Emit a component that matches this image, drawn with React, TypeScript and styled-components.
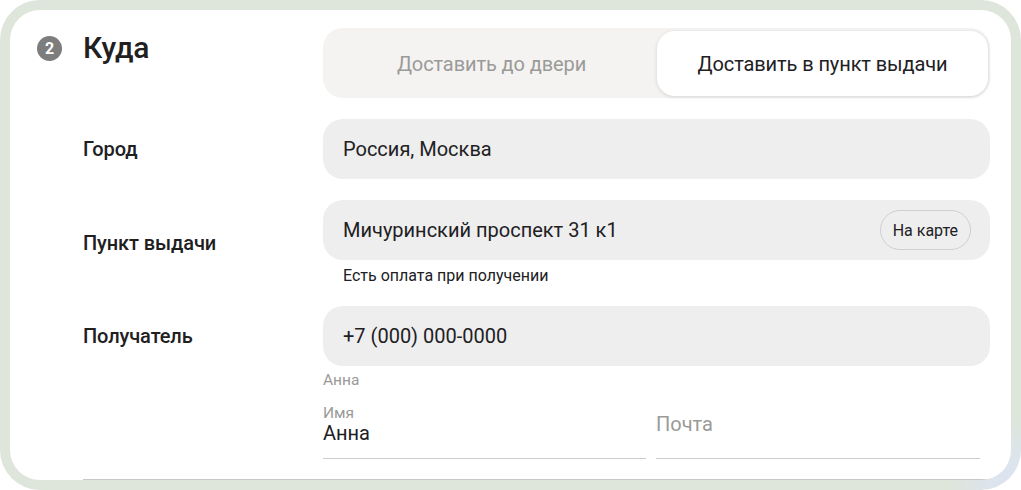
import React from "react";
import styled, { createGlobalStyle } from "styled-components";

const Global = createGlobalStyle`
  html, body { margin: 0; padding: 0; background: #ffffff; }
  body { font-family: "Roboto", "Noto Sans", sans-serif; color: #21201f; }
  * { box-sizing: border-box; }
`;

const Frame = styled.div`
  width: 1021px;
  height: 490px;
  border-radius: 40px;
  padding: 10px;
  background:
    radial-gradient(circle at 100% 100%, #dbe3f0 0, #dce4ee 28px, rgba(221, 229, 219, 0) 70px),
    #dee5db;
  overflow: hidden;
`;

const Card = styled.div`
  height: 100%;
  background: #ffffff;
  border-radius: 30px;
  padding: 18px 21px 0 27px;
  display: grid;
  grid-template-columns: 46px 240px 1fr;
  row-gap: 21px;
  align-content: start;
  overflow: hidden;
`;

const Badge = styled.div`
  width: 25px;
  height: 25px;
  border-radius: 50%;
  background: #7d7d7d;
  color: #ffffff;
  font-size: 16px;
  font-weight: 700;
  display: flex;
  align-items: center;
  justify-content: center;
  margin-top: 8px;
`;

const Title = styled.h2`
  margin: 0;
  padding-top: 2px;
  font-size: 30px;
  line-height: 36px;
  font-weight: 500;
  color: #21201f;
  letter-spacing: -0.3px;
`;

const Segmented = styled.div`
  height: 70px;
  background: #f4f3f1;
  border-radius: 20px;
  padding: 3px 2px 2px 3px;
  display: grid;
  grid-template-columns: 1fr 1fr;
`;

const Segment = styled.div<{ $active?: boolean }>`
  display: flex;
  align-items: center;
  justify-content: center;
  border-radius: 18px;
  font-size: 20px;
  color: ${(p) => (p.$active ? "#21201f" : "#9a9a98")};
  background: ${(p) => (p.$active ? "#ffffff" : "transparent")};
  box-shadow: ${(p) => (p.$active ? "0 1px 4px rgba(0,0,0,0.12)" : "none")};
  letter-spacing: -0.1px;
`;

const Label = styled.div<{ $top?: boolean }>`
  grid-column: 2;
  font-size: 20px;
  font-weight: 500;
  color: #21201f;
  display: flex;
  align-items: center;
  align-self: ${(p) => (p.$top ? "start" : "center")};
  height: ${(p) => (p.$top ? "60px" : "auto")};
  letter-spacing: -0.1px;
`;

const Field = styled.div`
  grid-column: 3;
  display: flex;
  flex-direction: column;
`;

const Input = styled.div`
  height: 60px;
  border-radius: 20px;
  background: #eeeeee;
  display: flex;
  align-items: center;
  justify-content: space-between;
  padding: 0 20px;
  font-size: 20px;
  color: #21201f;
`;

const MapButton = styled.div`
  height: 40px;
  padding: 0 12px;
  margin-right: -1px;
  border: 1px solid #cfcfcf;
  border-radius: 20px;
  display: flex;
  align-items: center;
  font-size: 16px;
  color: #21201f;
`;

const Hint = styled.div`
  margin-top: 7px;
  padding-left: 20px;
  font-size: 16px;
  line-height: 18px;
  color: #21201f;
`;

const Muted = styled.div`
  margin-top: 6px;
  font-size: 15.5px;
  line-height: 16px;
  color: #9a9a98;
`;

const Pair = styled.div`
  margin-top: 17px;
  display: grid;
  grid-template-columns: 323px 324px;
  column-gap: 10px;
`;

const Underlined = styled.div`
  height: 54px;
  border-bottom: 1px solid #cccccc;
  display: flex;
  flex-direction: column;
`;

const SmallLabel = styled.div`
  font-size: 15.5px;
  line-height: 16px;
  color: #9a9a98;
`;

const Value = styled.div`
  font-size: 20px;
  line-height: 24px;
  color: #21201f;
`;

const Placeholder = styled.div`
  padding-top: 7px;
  font-size: 20px;
  line-height: 24px;
  color: #9a9a98;
`;

const Divider = styled.div`
  grid-column: 2 / 4;
  margin-top: -1px;
  height: 1px;
  background: #c8c8c8;
`;

export default function App() {
  return (
    <>
      <Global />
      <Frame>
        <Card>
          <Badge>2</Badge>
          <Title>Куда</Title>
          <Segmented>
            <Segment>Доставить до двери</Segment>
            <Segment $active>Доставить в пункт выдачи</Segment>
          </Segmented>

          <Label>Город</Label>
          <Field>
            <Input>Россия, Москва</Input>
          </Field>

          <Label>Пункт выдачи</Label>
          <Field>
            <Input>
              <span>Мичуринский проспект 31 к1</span>
              <MapButton>На карте</MapButton>
            </Input>
            <Hint>Есть оплата при получении</Hint>
          </Field>

          <Label $top>Получатель</Label>
          <Field>
            <Input>+7 (000) 000-0000</Input>
            <Muted>Анна</Muted>
            <Pair>
              <Underlined>
                <SmallLabel>Имя</SmallLabel>
                <Value>Анна</Value>
              </Underlined>
              <Underlined>
                <Placeholder>Почта</Placeholder>
              </Underlined>
            </Pair>
          </Field>

          <Divider />
        </Card>
      </Frame>
    </>
  );
}
